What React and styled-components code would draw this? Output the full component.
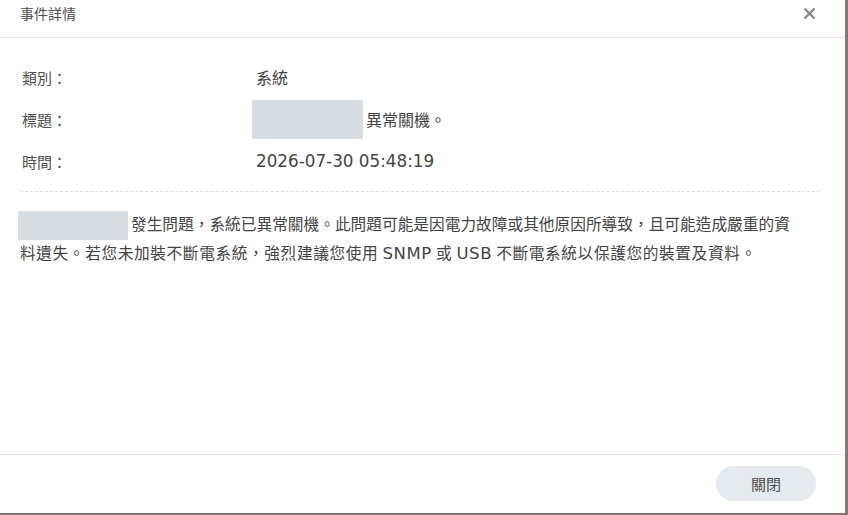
import React from "react";
import styled, { createGlobalStyle } from "styled-components";

const Global = createGlobalStyle`
  html, body { margin: 0; padding: 0; }
  body {
    background: #8c776c;
    font-family: "Noto Sans CJK TC", sans-serif;
    width: 848px;
    height: 515px;
    overflow: hidden;
  }
`;

const Dialog = styled.div`
  width: 845px;
  height: 513px;
  background: #ffffff;
  display: flex;
  flex-direction: column;
  box-sizing: border-box;
`;

const Header = styled.div`
  height: 38px;
  box-sizing: border-box;
  border-bottom: 1px solid #e3e5e8;
  display: flex;
  align-items: flex-start;
  justify-content: space-between;
  padding: 4px 28px 0 20px;
`;

const Title = styled.div`
  font-size: 14px;
  line-height: 18px;
  color: #4d4d4d;
`;

const CloseButton = styled.button`
  border: 0;
  background: transparent;
  padding: 0;
  margin-top: 1px;
  width: 16px;
  height: 16px;
  display: flex;
  align-items: center;
  justify-content: center;
  cursor: pointer;
`;

const Body = styled.div`
  flex: 1;
  padding: 18px 25px 0 20px;
  display: flex;
  flex-direction: column;
`;

const Row = styled.div`
  height: 42px;
  display: grid;
  grid-template-columns: 234px 1fr;
  align-items: center;
  padding-left: 2px;
`;

const Label = styled.div`
  font-size: 15px;
  color: #505050;
`;

const Value = styled.div`
  display: flex;
  align-items: center;
  font-size: 16px;
  color: #444;
  margin-left: ${(p) => p.$shift || 0}px;
`;

const Latin = styled.span`
  font-family: "DejaVu Sans", sans-serif;
  font-size: ${(p) => p.$size || 16.5}px;
`;

const Redacted = styled.span`
  display: inline-block;
  width: ${(p) => p.$w}px;
  height: ${(p) => p.$h}px;
  background: #d8dde1;
  vertical-align: middle;
  margin-left: ${(p) => p.$left || 0}px;
  margin-right: ${(p) => p.$gap || 0}px;
`;

const Divider = styled.div`
  margin-top: 9px;
  border-top: 1px dashed #dcdfe2;
`;

const Paragraph = styled.p`
  margin: 19px 0 0 0;
  font-size: 15.7px;
  line-height: 26px;
  color: #444;
  white-space: nowrap;
`;

const Line = styled.span`
  display: block;
  letter-spacing: ${(p) => p.$spacing || 0}px;
`;

const Footer = styled.div`
  height: 59px;
  box-sizing: border-box;
  border-top: 1px solid #e3e5e8;
  display: flex;
  justify-content: flex-end;
  align-items: flex-start;
  padding: 11px 29px 0 0;
`;

const PrimaryButton = styled.button`
  width: 100px;
  height: 35px;
  border: 0;
  border-radius: 18px;
  background: #e6ebf0;
  font-family: "Noto Sans CJK TC", sans-serif;
  font-size: 15px;
  color: #4d4d4d;
  cursor: pointer;
`;

export default function App() {
  return (
    <>
      <Global />
      <Dialog>
        <Header>
          <Title>事件詳情</Title>
          <CloseButton aria-label="close">
            <svg width="13" height="13" viewBox="0 0 13 13">
              <path d="M1.5 1.5 L11.5 11.5 M11.5 1.5 L1.5 11.5" stroke="#8a8a8a" strokeWidth="2.4" strokeLinecap="butt" />
            </svg>
          </CloseButton>
        </Header>
        <Body>
          <Row>
            <Label>類別：</Label>
            <Value>系統</Value>
          </Row>
          <Row>
            <Label>標題：</Label>
            <Value $shift={-4}>
              <Redacted $w={111} $h={39} $gap={3} />
              異常關機。
            </Value>
          </Row>
          <Row>
            <Label>時間：</Label>
            <Value>
              <Latin $size={16.8}>2026-07-30 05:48:19</Latin>
            </Value>
          </Row>
          <Divider />
          <Paragraph>
            <Line>
              <Redacted $w={110} $h={29} $gap={3} $left={-2} />
              發生問題，系統已異常關機。此問題可能是因電力故障或其他原因所導致，且可能造成嚴重的資
            </Line>
            <Line $spacing={0.6}>
              料遺失。若您未加裝不斷電系統，強烈建議您使用 <Latin>SNMP</Latin> 或 <Latin>USB</Latin> 不斷電系統以保護您的裝置及資料。
            </Line>
          </Paragraph>
        </Body>
        <Footer>
          <PrimaryButton>關閉</PrimaryButton>
        </Footer>
      </Dialog>
    </>
  );
}
